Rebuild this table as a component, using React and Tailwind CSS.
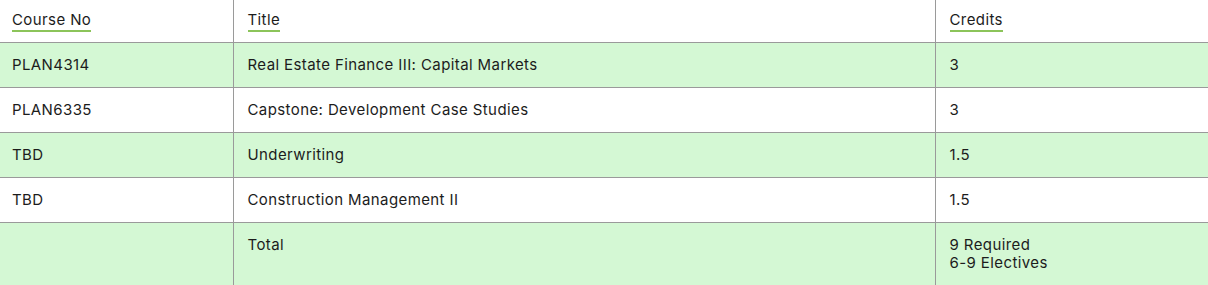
import React from 'react';

const rows = [
  { no: 'PLAN4314', title: 'Real Estate Finance III: Capital Markets', credits: ['3'], shaded: true },
  { no: 'PLAN6335', title: 'Capstone: Development Case Studies', credits: ['3'], shaded: false },
  { no: 'TBD', title: 'Underwriting', credits: ['1.5'], shaded: true },
  { no: 'TBD', title: 'Construction Management II', credits: ['1.5'], shaded: false },
  { no: '', title: 'Total', credits: ['9 Required', '6-9 Electives'], shaded: true },
];

const HeadLabel = ({ children }) => (
  <span className="inline-block border-b-2 border-[#8cc45a] pb-[1px] leading-[18px]">{children}</span>
);

export default function App() {
  return (
    <div className="w-[1208px] bg-white text-[#1c1c1c] font-['Inter','Liberation_Sans',sans-serif] text-[15px] tracking-[0.4px]">
      <table className="w-full table-fixed border-collapse">
        <colgroup>
          <col className="w-[233px]" />
          <col className="w-[702px]" />
          <col />
        </colgroup>
        <thead>
          <tr className="h-[42px]">
            <th className="px-[12px] pt-[9px] pb-[10px] text-left font-normal align-top">
              <HeadLabel>Course No</HeadLabel>
            </th>
            <th className="border-l border-[#9a9a9a] pl-[14px] pr-[12px] pt-[9px] pb-[10px] text-left font-normal align-top">
              <HeadLabel>Title</HeadLabel>
            </th>
            <th className="border-l border-[#9a9a9a] pl-[14px] pr-[12px] pt-[9px] pb-[10px] text-left font-normal align-top">
              <HeadLabel>Credits</HeadLabel>
            </th>
          </tr>
        </thead>
        <tbody>
          {rows.map((r, i) => (
            <tr key={i} className={`border-t border-[#9a9a9a] ${r.shaded ? 'bg-[#d4f8d4]' : 'bg-white'}`}>
              <td className="px-[12px] pt-[13px] pb-[13px] align-top leading-[18px]">{r.no}</td>
              <td className="border-l border-[#9a9a9a] pl-[14px] pr-[12px] pt-[13px] pb-[13px] align-top leading-[18px]">{r.title}</td>
              <td className="border-l border-[#9a9a9a] pl-[14px] pr-[12px] pt-[13px] pb-[13px] align-top leading-[18px]">
                {r.credits.map((c) => (
                  <div key={c}>{c}</div>
                ))}
              </td>
            </tr>
          ))}
        </tbody>
      </table>
    </div>
  );
}
